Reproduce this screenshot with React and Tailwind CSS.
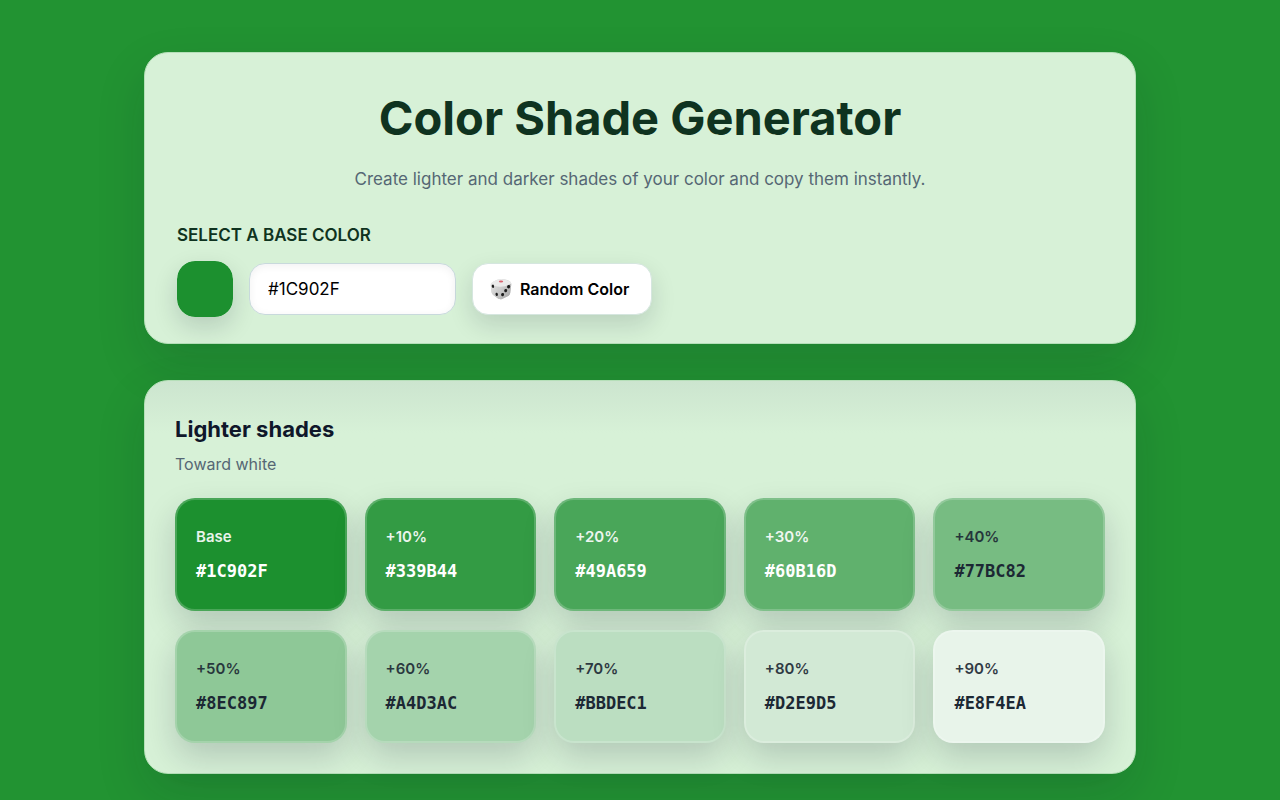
import { useState } from 'react';

const INITIAL_SHADES = [
    { label: 'Base', hex: '#1C902F' },
    { label: '+10%', hex: '#339B44' },
    { label: '+20%', hex: '#49A659' },
    { label: '+30%', hex: '#60B16D' },
    { label: '+40%', hex: '#77BC82' },
    { label: '+50%', hex: '#8EC897' },
    { label: '+60%', hex: '#A4D3AC' },
    { label: '+70%', hex: '#BBDEC1' },
    { label: '+80%', hex: '#D2E9D5' },
    { label: '+90%', hex: '#E8F4EA' },
];

const toChannels = (hex) => [1, 3, 5].map((i) => parseInt(hex.slice(i, i + 2), 16));

const isLight = (hex) => {
    const [r, g, b] = toChannels(hex);
    return r * 0.299 + g * 0.587 + b * 0.114 > 155;
};

// Mixes the base color with white in steps of 10%
const makeShades = (hex) =>
    INITIAL_SHADES.map((shade, step) => ({
        label: shade.label,
        hex:
            '#' +
            toChannels(hex)
                .map((c) => Math.round(c + (255 - c) * (step / 10)).toString(16).padStart(2, '0'))
                .join('')
                .toUpperCase(),
    }));

function DiceIcon() {
    return (
        <svg className="w-[22px] h-[22px]" viewBox="0 0 22 22" aria-hidden="true">
            <defs>
                <linearGradient id="diceLeft" x1="0" y1="0" x2="1" y2="1">
                    <stop offset="0" stopColor="#e4e4e4" />
                    <stop offset="1" stopColor="#bdbdbd" />
                </linearGradient>
                <linearGradient id="diceRight" x1="0" y1="0" x2="1" y2="1">
                    <stop offset="0" stopColor="#d8d8d8" />
                    <stop offset="1" stopColor="#a0a0a0" />
                </linearGradient>
            </defs>
            <path d="M3 4 Q6 1.5 11 1 Q17 1.2 20 3.6 Q21.6 4.5 21.2 7 L20.2 15 Q20 17 18.2 18 L12 21 Q10 21.8 8 20.5 L3.2 17 Q1.8 16 1.5 14 L.8 7 Q.7 5 3 4Z" fill="#cfcfcf" />
            <path d="M1 5.5 L9.5 8.5 L9.8 21 Q9 21.2 8 20.5 L3.2 17 Q1.8 16 1.5 14 L.8 7Z" fill="url(#diceLeft)" />
            <path d="M9.5 8.5 L21.2 5.5 L21.2 7 L20.2 15 Q20 17 18.2 18 L12 21 Q10.8 21.5 9.8 21Z" fill="url(#diceRight)" />
            <path d="M1 5.7 Q1.4 4.3 3.5 3.6 Q7 1.4 11 1 Q16.5 1.2 20 3.6 Q21 4.3 21.2 5.5 Q16 8.6 10 8.8 Q4 8.2 1 5.7Z" fill="#ebebeb" />
            <ellipse cx="11" cy="3.5" rx="2.2" ry="1" fill="#d8626f" />
            <ellipse cx="2.9" cy="8.3" rx="1.2" ry="1.7" transform="rotate(-15 2.9 8.3)" fill="#1c1c1c" />
            <ellipse cx="6.7" cy="16.4" rx="1.2" ry="1.7" transform="rotate(-15 6.7 16.4)" fill="#1c1c1c" />
            <ellipse cx="18.6" cy="8.7" rx="1.5" ry="1.7" transform="rotate(20 18.6 8.7)" fill="#1c1c1c" />
            <ellipse cx="15.7" cy="12.6" rx="1.5" ry="1.7" transform="rotate(20 15.7 12.6)" fill="#1c1c1c" />
            <ellipse cx="12.6" cy="16.6" rx="1.5" ry="1.7" transform="rotate(20 12.6 16.6)" fill="#1c1c1c" />
        </svg>
    );
}

function ShadeCard({ label, hex }) {
    return (
        <button
            type="button"
            onClick={() => navigator.clipboard?.writeText(hex)}
            className={`flex flex-col items-start gap-2 rounded-[20px] border-2 border-white/20 px-[19px] pt-[25px] pb-6 text-left cursor-pointer shadow-[0_14px_32px_rgba(15,23,42,0.18)] ${isLight(hex) ? 'text-[#1c2834]' : 'text-white'}`}
            style={{ backgroundColor: hex }}
        >
            <span className="text-[15px] leading-6 font-semibold opacity-90">{label}</span>
            <span className="font-['DejaVu_Sans_Mono',monospace] text-[17px] leading-7 font-bold">{hex}</span>
        </button>
    );
}

export default function App() {
    const [color, setColor] = useState('#1C902F');
    const [shades, setShades] = useState(INITIAL_SHADES);

    const changeColor = (value) => {
        setColor(value);
        if (/^#[0-9a-f]{6}$/i.test(value)) setShades(makeShades(value));
    };

    const handleRandom = () => {
        const value = Math.floor(Math.random() * 0x1000000).toString(16).padStart(6, '0');
        changeColor('#' + value.toUpperCase());
    };

    const base = shades[0].hex;

    return (
        <div className="min-h-screen bg-[#229332] px-6 pt-[52px] pb-[26px] font-[Inter,sans-serif]">
            <main className="mx-auto flex max-w-[992px] flex-col gap-9">
                <section className="rounded-3xl border border-[#b5dfb8] bg-[#d7f1d7] px-8 pt-8 pb-[26px] shadow-[0_20px_50px_rgba(15,23,42,0.14)]">
                    <h1 className="text-center text-[47px] leading-[66px] font-bold text-[#0f3320]">Color Shade Generator</h1>
                    <p className="mt-4 text-center text-[17px] leading-6 text-[#556774]">
                        Create lighter and darker shades of your color and copy them instantly.
                    </p>
                    <label htmlFor="base-color" className="mt-8 block text-[17px] leading-6 font-semibold text-[#0f3320]">
                        SELECT A BASE COLOR
                    </label>
                    <div className="mt-[14px] flex flex-wrap items-center gap-4">
                        <input
                            type="color"
                            aria-label="Pick a color"
                            value={base}
                            onChange={(e) => changeColor(e.target.value.toUpperCase())}
                            className="size-14 cursor-pointer appearance-none rounded-[18px] shadow-[0_10px_24px_rgba(15,23,42,0.16)] [&::-webkit-color-swatch-wrapper]:p-0 [&::-webkit-color-swatch]:rounded-[18px] [&::-webkit-color-swatch]:border-0"
                        />
                        <input
                            id="base-color"
                            type="text"
                            value={color}
                            onChange={(e) => changeColor(e.target.value)}
                            className="h-[52px] w-[207px] rounded-2xl border border-[#c8d9dc] bg-white px-[18px] text-[17px] text-black shadow-[inset_0_2px_8px_rgba(15,23,42,0.06)]"
                        />
                        <button
                            type="button"
                            onClick={handleRandom}
                            className="flex h-[52px] w-[180px] cursor-pointer items-center gap-2 rounded-2xl border border-[#d5e6df] bg-white px-[17px] text-base font-semibold whitespace-nowrap text-black shadow-[0_10px_24px_rgba(15,23,42,0.14)]"
                        >
                            <DiceIcon />
                            Random Color
                        </button>
                    </div>
                </section>

                <section className="rounded-3xl border border-[#b5dfb8] bg-linear-to-b from-[#cce5cf] to-[#d7f1d7] to-[52px] px-[30px] pt-8 pb-[30px] shadow-[0_20px_50px_rgba(15,23,42,0.14)]">
                    <h2 className="text-[22px] leading-8 font-bold text-[#0f172a]">Lighter shades</h2>
                    <p className="mt-[7px] text-base leading-6 text-[#556774]">Toward white</p>
                    <div className="mt-[22px] grid grid-cols-2 gap-x-[18px] gap-y-[19px] sm:grid-cols-3 lg:grid-cols-5">
                        {shades.map((shade) => (
                            <ShadeCard key={shade.label} label={shade.label} hex={shade.hex} />
                        ))}
                    </div>
                </section>
            </main>
        </div>
    );
}
